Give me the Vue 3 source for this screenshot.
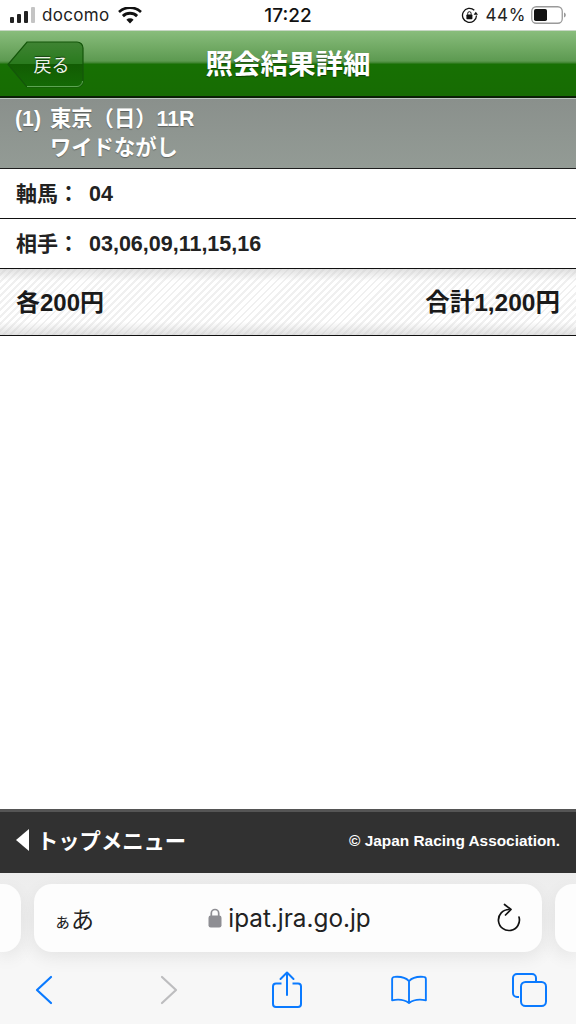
<script setup>
const topRows = [
  { label: '軸馬：', value: '04' },
  { label: '相手：', value: '03,06,09,11,15,16' },
]
</script>

<template>
  <div class="page">
    <div class="status">
      <div class="st-left">
        <svg class="signal" width="26" height="18" viewBox="0 0 26 18">
          <rect x="0" y="11" width="4" height="6" rx="1" fill="#222" />
          <rect x="7" y="8" width="4" height="9" rx="1" fill="#222" />
          <rect x="14" y="5" width="4" height="12" rx="1" fill="#222" />
          <rect x="21" y="1" width="4" height="16" rx="1" fill="#c4c4c4" />
        </svg>
        <span class="carrier">docomo</span>
        <svg class="wifi" width="24" height="17" viewBox="0 0 24 17">
          <path d="M12 16.500l-3.600-3.800a5.200 5.200 0 0 1 7.200 0z" fill="#111" />
          <path d="M5.900 10.200a8.800 8.800 0 0 1 12.200 0l2-2.100a11.700 11.700 0 0 0-16.200 0z" fill="#111" />
          <path d="M1.900 6a14.500 14.500 0 0 1 20.200 0l1.800-1.900a17.200 17.200 0 0 0-23.800 0z" fill="#111" />
        </svg>
      </div>
      <div class="clock">17:22</div>
      <div class="st-right">
        <svg class="lock-rot" width="17" height="17" viewBox="0 0 17 17">
          <path d="M13.300 3.300A7 7 0 1 0 15.500 8.500" fill="none" stroke="#111" stroke-width="1.300" />
          <path d="M12.600 7.800h4.400l-2.200-3z" fill="#111" />
          <rect x="5.400" y="7.600" width="6" height="4.600" rx=".7" fill="#111" />
          <path d="M6.700 7.800V6.400a1.700 1.700 0 0 1 3.400 0v1.400" fill="none" stroke="#111" stroke-width="1" />
        </svg>
        <span class="pct">44%</span>
        <svg class="battery" width="35" height="18" viewBox="0 0 35 18">
          <rect x=".75" y=".75" width="30.500" height="16.500" rx="4.500" fill="none" stroke="#9a9a9a" stroke-width="1.300" />
          <rect x="3" y="3" width="13" height="12" rx="1.800" fill="#111" />
          <path d="M33 6.500c1.300.4 1.800 1.400 1.800 2.500s-.5 2.100-1.800 2.500z" fill="#9a9a9a" />
        </svg>
      </div>
    </div>

    <header class="head">
      <div class="head-side">
        <div class="back">
          <svg class="back-shape" width="77" height="47" viewBox="0 0 77 47">
            <defs>
              <linearGradient id="backFill" x1="0" y1="0" x2="0" y2="1">
                <stop offset="0" stop-color="#3f8433" />
                <stop offset=".48" stop-color="#2a7a1e" />
                <stop offset=".5" stop-color="#125c03" />
                <stop offset="1" stop-color="#146a05" />
              </linearGradient>
            </defs>
            <path d="M1 23.500L20 1h50a6 6 0 0 1 6 6v33a6 6 0 0 1-6 6H20z" fill="url(#backFill)" stroke="#14560a" stroke-width="1.200" />
            <path d="M20 45.500h50a5.500 5.500 0 0 0 5.500-5.500" fill="none" stroke="#5da552" stroke-width="1" />
          </svg>
          <span class="back-label">戻る</span>
        </div>
      </div>
      <h1 class="title">照会結果詳細</h1>
      <div class="head-side"></div>
    </header>

    <section class="race">
      <div class="race-line"><span class="race-no">(1)</span><span>東京（日）11R</span></div>
      <div class="race-line"><span class="race-no"></span><span>ワイドながし</span></div>
    </section>

    <div v-for="row in topRows" :key="row.label" class="row">
      <span class="row-label">{{ row.label }}</span>
      <span class="row-value">{{ row.value }}</span>
    </div>

    <div class="total">
      <span>各200円</span>
      <span class="sum">合計1,200円</span>
    </div>

    <main class="blank"></main>

    <footer class="foot">
      <div class="foot-left">
        <span class="tri"></span>
        <span class="menu-label">トップメニュー</span>
      </div>
      <span class="copy">© Japan Racing Association.</span>
    </footer>

    <div class="safari">
      <div class="url-row">
        <div class="tab-edge left"></div>
        <div class="url">
          <span class="aa"><small>ぁ</small>あ</span>
          <span class="addr">
            <svg width="14" height="20" viewBox="0 0 14 20">
              <rect x="0.500" y="7.500" width="13" height="12" rx="2.200" fill="#8e8e93" />
              <path d="M3.300 8V5.200a3.700 3.700 0 0 1 7.400 0V8" fill="none" stroke="#8e8e93" stroke-width="1.700" />
            </svg>
            ipat.jra.go.jp
          </span>
          <svg class="reload" width="26" height="30" viewBox="0 0 26 30">
            <path d="M13 6.500A10.500 10.500 0 1 0 23 14" fill="none" stroke="#111" stroke-width="1.700" stroke-linecap="round" />
            <path d="M8.500 1.500l6.500 5-5.500 5.500" fill="none" stroke="#111" stroke-width="1.700" stroke-linecap="round" stroke-linejoin="round" />
          </svg>
        </div>
        <div class="tab-edge right"></div>
      </div>
      <nav class="tools">
        <span class="tool">
          <svg width="20" height="30" viewBox="0 0 20 30">
            <path d="M17 2L3 15l14 13" fill="none" stroke="#0a7aff" stroke-width="2.200" stroke-linecap="round" stroke-linejoin="round" />
          </svg>
        </span>
        <span class="tool forward">
          <svg width="20" height="30" viewBox="0 0 20 30">
            <path d="M3 2l14 13L3 28" fill="none" stroke="#bdbdbf" stroke-width="2.200" stroke-linecap="round" stroke-linejoin="round" />
          </svg>
        </span>
        <span class="tool">
          <svg width="30" height="38" viewBox="0 0 30 38">
            <path d="M9.500 12.500H4a3 3 0 0 0-3 3V33a3 3 0 0 0 3 3h22a3 3 0 0 0 3-3V15.500a3 3 0 0 0-3-3h-5.500" fill="none" stroke="#0a7aff" stroke-width="2" />
            <path d="M15 24V2M8.500 8L15 1.500 21.500 8" fill="none" stroke="#0a7aff" stroke-width="2" stroke-linecap="round" stroke-linejoin="round" />
          </svg>
        </span>
        <span class="tool">
          <svg width="36" height="30" viewBox="0 0 38 32">
            <path d="M19 6.500C15.500 2.800 9 1.500 3.500 2A2.500 2.500 0 0 0 1 4.500V27c6.500-1.300 13.500-.5 18 3 4.500-3.500 11.500-4.300 18-3V4.500A2.500 2.500 0 0 0 34.500 2C29 1.500 22.500 2.800 19 6.500zM19 6.500V30" fill="none" stroke="#0a7aff" stroke-width="2" stroke-linejoin="round" />
          </svg>
        </span>
        <span class="tool">
          <svg width="36" height="34" viewBox="0 0 36 34">
            <path d="M7 24H5a4 4 0 0 1-4-4V5a4 4 0 0 1 4-4h15a4 4 0 0 1 4 4v3" fill="none" stroke="#0a7aff" stroke-width="2" />
            <rect x="9" y="9" width="25" height="24" rx="4.500" fill="none" stroke="#0a7aff" stroke-width="2" />
          </svg>
        </span>
      </nav>
    </div>
  </div>
</template>

<style scoped>
.page {
  width: 576px;
  height: 1024px;
  display: flex;
  flex-direction: column;
  overflow: hidden;
  background: #fff;
  font-family: "Liberation Sans", "Noto Sans CJK JP", sans-serif;
  color: #111;
}
.status {
  height: 30px;
  flex: none;
  display: grid;
  grid-template-columns: 1fr auto 1fr;
  align-items: center;
  padding: 0 10px;
  font-family: Inter, "Liberation Sans", sans-serif;
  font-size: 17px;
}
.st-left { display: flex; align-items: center; }
.signal { margin-right: 6px; }
.carrier { color: #222; margin-right: 9px; letter-spacing: .3px; }
.clock { font-weight: 500; font-size: 19px; }
.st-right { display: flex; align-items: center; justify-content: flex-end; gap: 8px; }
.pct { color: #222; letter-spacing: .6px; }
.battery { margin-left: -3px; }

.head {
  height: 68px;
  flex: none;
  box-sizing: border-box;
  display: grid;
  grid-template-columns: 1fr auto 1fr;
  align-items: center;
  border-top: 1px solid #c9d8c6;
  border-bottom: 2px solid #0b1f06;
  background: linear-gradient(#89bd7c 0, #5d9a51 46%, #3f8530 49%, #177003 51%, #176c03 100%);
}
.head-side { display: flex; }
.back {
  position: relative;
  width: 77px;
  height: 47px;
  margin: 1px 0 0 7px;
  display: flex;
  align-items: center;
  justify-content: center;
}
.back-shape { position: absolute; inset: 0; }
.back-label {
  position: relative;
  padding-left: 12px;
  color: #eef4ea;
  font-size: 18px;
  text-shadow: 0 -1px 1px rgba(0, 0, 0, .5);
}
.title {
  margin: 2px 0 0;
  color: #fff;
  font-size: 27.500px;
  line-height: 1;
  font-weight: 700;
  text-shadow: 0 1px 1px rgba(0, 0, 0, .45);
}
.race {
  height: 71px;
  flex: none;
  box-sizing: border-box;
  padding: 6px 15px 0;
  border-top: 1px solid #bcc6bf;
  border-bottom: 1px solid #1d1d1d;
  background: linear-gradient(#8a908c, #939b95);
  color: #fff;
  font-size: 21.300px;
  font-weight: 700;
  line-height: 29px;
  text-shadow: 0 1px 1px rgba(0, 0, 0, .35);
}
.race-line { display: flex; }
.race-no { width: 35px; }
.row {
  height: 50px;
  flex: none;
  box-sizing: border-box;
  display: flex;
  align-items: baseline;
  padding: 13px 16px 0;
  border-bottom: 1px solid #111;
  font-size: 21px;
  line-height: 24px;
  font-weight: 700;
  color: #222;
}
.row-label { width: 73px; }
.row-value { font-size: 21.500px; }
.total {
  height: 67px;
  flex: none;
  box-sizing: border-box;
  display: flex;
  align-items: center;
  justify-content: space-between;
  padding: 0 16px 3px;
  border-bottom: 1px solid #111;
  font-size: 24px;
  font-weight: 700;
  color: #1a1a1a;
  background:
    linear-gradient(rgba(200, 200, 200, .55), rgba(255, 255, 255, 0) 18%, rgba(255, 255, 255, 0) 80%, rgba(200, 200, 200, .55)),
    repeating-linear-gradient(135deg, #fff 0 3px, #f0f0f0 3px 5px);
}
.sum { font-size: 24.500px; }
.blank { flex: 1; background: #fff; }
.foot {
  height: 64px;
  flex: none;
  box-sizing: border-box;
  display: flex;
  align-items: center;
  justify-content: space-between;
  padding: 0 16px 5px;
  border-top: 3px solid;
  border-image: linear-gradient(#555 0 33%, #c8c8c8 33% 66%, #444 66%) 3;
  background: #313131;
  color: #fff;
  font-weight: 700;
}
.foot-left { display: flex; align-items: center; gap: 8px; font-size: 21.300px; }
.menu-label { margin-top: -1px; }
.tri {
  width: 0;
  height: 0;
  border-style: solid;
  border-width: 11px 13px 11px 0;
  border-color: transparent #fff transparent transparent;
}
.copy { font-size: 15.400px; margin-top: 2px; }
.safari {
  height: 151px;
  flex: none;
  box-sizing: border-box;
  padding-top: 11px;
  background: linear-gradient(#ededed, #f0f0f0 30%, #f7f7f7 60%);
}
.url-row {
  height: 68px;
  display: grid;
  grid-template-columns: 21px 1fr 21px;
  gap: 13px;
}
.url, .tab-edge {
  background: #fdfdfd;
  box-shadow: 0 6px 18px rgba(0, 0, 0, .07);
}
.url {
  border-radius: 18px;
  display: grid;
  grid-template-columns: 1fr auto 1fr;
  align-items: center;
  padding: 0 20px;
  font-family: Inter, "Liberation Sans", sans-serif;
  color: #222;
}
.tab-edge.left { border-radius: 0 18px 18px 0; }
.tab-edge.right { border-radius: 18px 0 0 18px; }
.aa { font-size: 23px; font-family: "Noto Sans CJK JP", sans-serif; white-space: nowrap; }
.aa small { font-size: 17px; }
.addr { display: flex; align-items: center; gap: 6px; font-size: 24.300px; margin-left: 3px; }
.reload { justify-self: end; }
.tools {
  height: 76px;
  display: flex;
  align-items: center;
  justify-content: space-between;
  padding: 0 28px 0 26px;
}
.tool { width: 36px; display: flex; justify-content: center; }
.tool.forward svg { margin-left: 6px; }
</style>

<style>
html, body { margin: 0; background: #fff; }
</style>
